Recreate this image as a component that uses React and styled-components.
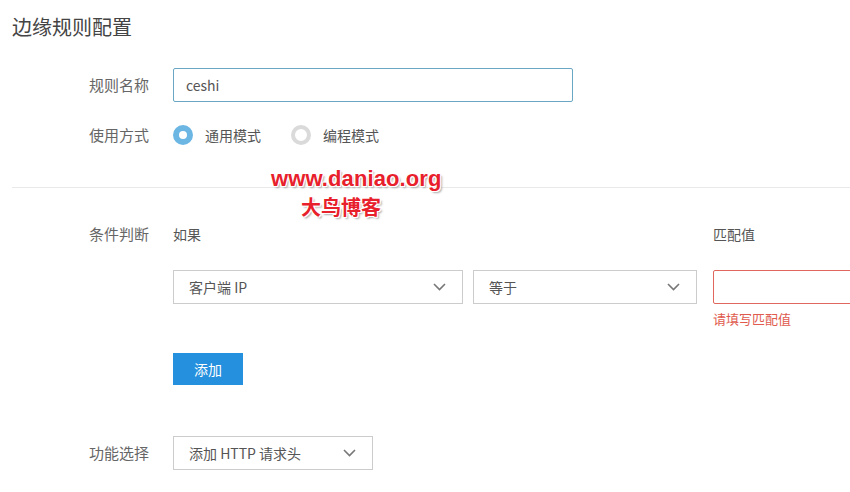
import React from 'react';
import styled, { createGlobalStyle } from 'styled-components';

const GlobalStyle = createGlobalStyle`
  html, body {
    margin: 0;
    padding: 0;
    background: #fff;
    overflow: hidden;
  }
  body {
    font-family: "Noto Sans CJK SC", "Noto Sans", sans-serif;
    color: #555;
  }
`;

const Page = styled.div`
  position: relative;
  box-sizing: border-box;
  width: 850px;
  height: 492px;
  overflow: hidden;
  padding: 13px 0 0 12px;
`;

const Title = styled.h1`
  margin: 0;
  font-size: 20px;
  line-height: 28px;
  font-weight: 400;
  color: #444;
`;

const Row = styled.div`
  display: grid;
  grid-template-columns: 84px 1fr;
  align-items: ${p => (p.$top ? 'start' : 'center')};
  margin: ${p => p.$margin || '0'};
  padding-left: 77px;
`;

const Label = styled.div`
  font-size: 15px;
  line-height: ${p => p.$lh || '34px'};
  color: #666;
`;

const TextInput = styled.input`
  box-sizing: border-box;
  width: ${p => p.$width || '400px'};
  height: 34px;
  padding: 0 12px;
  border: 1px solid ${p => (p.$error ? '#e0675d' : p.$focus ? '#6aa7c4' : '#ccc')};
  border-radius: 2px;
  font-family: inherit;
  font-size: 14px;
  color: #555;
  outline: none;
  background: #fff;
`;

const RadioGroup = styled.div`
  display: flex;
  align-items: center;
  height: 34px;
`;

const RadioItem = styled.label`
  display: flex;
  align-items: center;
  gap: 12px;
  margin-right: 30px;
  font-size: 14px;
  color: #555;
`;

const RadioDot = styled.span`
  box-sizing: border-box;
  width: 20px;
  height: 20px;
  border-radius: 50%;
  border: ${p => (p.$checked ? '6px solid #6cb6e4' : '4px solid #dadada')};
  background: #fff;
`;

const Divider = styled.hr`
  margin: 35px 0 0;
  border: 0;
  border-top: 1px solid #e9e9e9;
`;

const CondGrid = styled.div`
  display: grid;
  grid-template-columns: 290px 224px 200px;
  column-gap: 10px;
`;

const ColHead = styled.div`
  font-size: 14px;
  line-height: 20px;
  color: #555;
  grid-column: ${p => p.$span || 'auto'};
  padding-left: ${p => (p.$shift ? '6px' : '0')};
`;

const Cell = styled.div`
  padding-left: ${p => (p.$shift ? '6px' : '0')};
  margin-top: 26px;
`;

const SelectBox = styled.div`
  box-sizing: border-box;
  display: flex;
  align-items: center;
  justify-content: space-between;
  width: ${p => p.$width || '100%'};
  height: 34px;
  padding: 0 16px 0 15px;
  border: 1px solid #ccc;
  background: #fff;
  font-size: 14px;
  color: #555;
`;

const ErrorText = styled.div`
  margin-top: 5px;
  font-size: 13px;
  line-height: 20px;
  color: #e05a4e;
`;

const AddButton = styled.button`
  margin-top: 24px;
  width: 70px;
  height: 32px;
  border: 0;
  border-radius: 0;
  background: #2590de;
  color: #fff;
  font-family: inherit;
  font-size: 14px;
  cursor: pointer;
`;

const Watermark = styled.div`
  position: absolute;
  left: 271px;
  top: 164px;
  display: flex;
  flex-direction: column;
  align-items: flex-start;
  font-weight: 700;
  color: #e8202b;
  text-shadow: 1px 1px 0 #fff, -1px -1px 0 #fff, 1px -1px 0 #fff, -1px 1px 0 #fff, 2px 2px 2px #aaa;
  pointer-events: none;
`;

const WmUrl = styled.span`
  font-family: "Liberation Sans", Arial, sans-serif;
  font-size: 22px;
  line-height: 30px;
  letter-spacing: 0.1px;
`;

const WmName = styled.span`
  margin: 0 0 0 30px;
  font-size: 20px;
  line-height: 26px;
`;

const Chevron = () => (
  <svg width="13" height="8" viewBox="0 0 13 8" fill="none">
    <path d="M1 1l5.5 5.5L12 1" stroke="#777" strokeWidth="1.6" />
  </svg>
);

const Select = ({ children, width }) => (
  <SelectBox $width={width}>
    <span>{children}</span>
    <Chevron />
  </SelectBox>
);

export default function App() {
  return (
    <Page>
      <GlobalStyle />
      <Title>边缘规则配置</Title>

      <Row $margin="27px 0 0">
        <Label>规则名称</Label>
        <TextInput $focus defaultValue="ceshi" />
      </Row>

      <Row $margin="16px 0 0">
        <Label>使用方式</Label>
        <RadioGroup>
          <RadioItem>
            <RadioDot $checked />
            通用模式
          </RadioItem>
          <RadioItem>
            <RadioDot />
            编程模式
          </RadioItem>
        </RadioGroup>
      </Row>

      <Divider />

      <Row $top $margin="36px 0 0">
        <Label $lh="20px">条件判断</Label>
        <CondGrid>
          <ColHead $span="1 / 3">如果</ColHead>
          <ColHead $shift>匹配值</ColHead>
          <Cell>
            <Select>客户端 IP</Select>
          </Cell>
          <Cell>
            <Select>等于</Select>
          </Cell>
          <Cell $shift>
            <TextInput $error $width="200px" />
            <ErrorText>请填写匹配值</ErrorText>
          </Cell>
        </CondGrid>
      </Row>

      <Row>
        <span />
        <div>
          <AddButton>添加</AddButton>
        </div>
      </Row>

      <Row $margin="51px 0 0">
        <Label>功能选择</Label>
        <Select width="200px">添加 HTTP 请求头</Select>
      </Row>

      <Watermark>
        <WmUrl>www.daniao.org</WmUrl>
        <WmName>大鸟博客</WmName>
      </Watermark>
    </Page>
  );
}
